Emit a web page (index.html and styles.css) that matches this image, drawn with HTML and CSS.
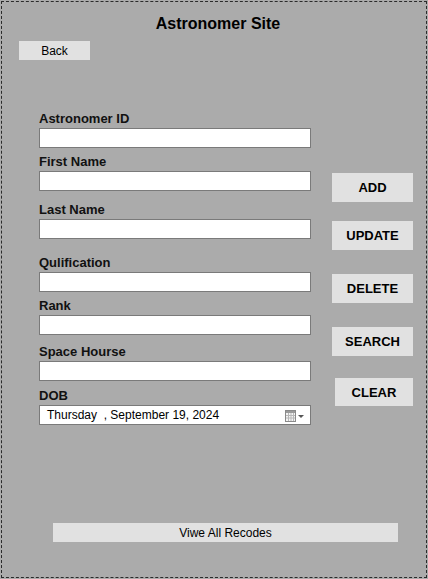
FILE: index.html
```html
<!DOCTYPE html>
<html>
<head>
<meta charset="utf-8">
<title>Astronomer Site</title>
<link rel="stylesheet" href="styles.css">
</head>
<body>
<div class="frame">
  <h1 class="title">Astronomer Site</h1>
  <button class="btn back">Back</button>
  <div class="main">
    <div class="fields">
      <div class="field f1"><label>Astronomer ID</label><div class="input"></div></div>
      <div class="field f2"><label>First Name</label><div class="input"></div></div>
      <div class="field f3"><label>Last Name</label><div class="input"></div></div>
      <div class="field f4"><label>Qulification</label><div class="input"></div></div>
      <div class="field f5"><label>Rank</label><div class="input"></div></div>
      <div class="field f6"><label>Space Hourse</label><div class="input"></div></div>
      <div class="field f7"><label>DOB</label>
        <div class="input date">
          <span class="date-text">Thursday&nbsp; , September 19, 2024</span>
          <svg class="cal" width="20" height="12" viewBox="0 0 20 12">
            <rect x="0.5" y="0.5" width="10" height="11" fill="#f4f4f4" stroke="#8a8a8a"/>
            <rect x="1" y="1" width="9" height="2" fill="#9a9a9a"/>
            <path d="M3.5 3v8M6 3v8M8.5 3v8M1 5.5h9M1 8h9" stroke="#b8b8b8" stroke-width="1"/>
            <path d="M13 5h6l-3 3z" fill="#555"/>
          </svg>
        </div>
      </div>
    </div>
    <div class="actions">
      <button class="btn act add">ADD</button>
      <button class="btn act update">UPDATE</button>
      <button class="btn act delete">DELETE</button>
      <button class="btn act search">SEARCH</button>
      <button class="btn act clear">CLEAR</button>
    </div>
  </div>
  <button class="btn view">Viwe All Recodes</button>
</div>
</body>
</html>
```
FILE: styles.css
```css
* { box-sizing: border-box; }
html, body { margin: 0; padding: 0; }
body {
  background: #ababab;
  font-family: "Liberation Sans", Arial, sans-serif;
  color: #000;
  width: 428px;
  height: 579px;
  overflow: hidden;
}
.frame {
  width: 426px;
  height: 577px;
  margin: 1px;
  border: 1px dashed #2a2a2a;
  display: flex;
  flex-direction: column;
  align-items: flex-start;
}
.title {
  align-self: stretch;
  margin: 12px 0 0 0;
  text-align: center;
  font-size: 16px;
  line-height: 20px;
  font-weight: bold;
  padding-left: 8px;
}
.btn {
  background: #e1e1e1;
  border: none;
  padding: 0;
  margin: 0;
  font-family: "Liberation Sans", Arial, sans-serif;
  color: #000;
}
.back {
  margin: 7px 0 0 17px;
  width: 71px;
  height: 19px;
  font-size: 12px;
}
.main {
  display: flex;
  margin: 51px 0 0 37px;
  gap: 21px;
}
.fields {
  display: flex;
  flex-direction: column;
  width: 272px;
}
.field { display: flex; flex-direction: column; }
.field label {
  font-size: 13px;
  font-weight: bold;
  line-height: 15px;
  height: 15px;
  margin-bottom: 2px;
  color: #111;
}
.input {
  height: 20px;
  width: 272px;
  background: #fff;
  border: 1px solid #7a7a7a;
}
.f2 { margin-top: 6px; }
.f3 { margin-top: 11px; }
.f4 { margin-top: 16px; }
.f5 { margin-top: 6px; }
.f6 { margin-top: 9px; }
.f7 { margin-top: 7px; }
.date {
  display: flex;
  align-items: center;
  justify-content: space-between;
  padding: 0 5px 0 7px;
}
.date-text { font-size: 12px; white-space: pre; }
.cal { display: block; margin-top: 1px; }
.actions {
  display: flex;
  flex-direction: column;
  align-items: flex-end;
  width: 81px;
  padding-top: 62px;
}
.act {
  width: 81px;
  height: 29px;
  font-size: 13px;
  font-weight: bold;
}
.update { margin-top: 19px; }
.delete { margin-top: 24px; }
.search { margin-top: 24px; }
.clear { margin-top: 22px; width: 78px; height: 28px; }
.view {
  margin: auto 0 35px 51px;
  width: 345px;
  height: 19px;
  font-size: 12px;
}
```
